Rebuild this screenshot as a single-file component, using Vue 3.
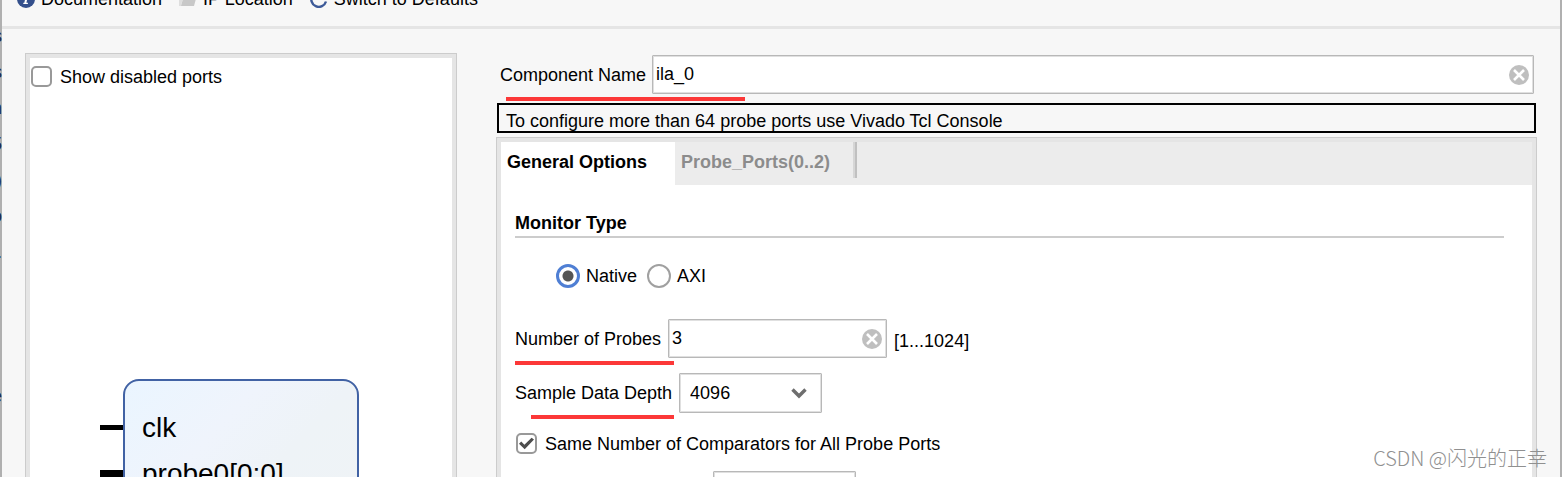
<script setup>
import { ref } from 'vue'

const showDisabled = ref(false)
const componentName = ref('ila_0')
const monitorType = ref('native')
const probeCount = ref('3')
const depth = ref('4096')
const sameComparators = ref(true)
const comparators = ref('')
const backdropLines = ['s', 's', 'n', '5', ')', 'o', '.', '', '', '', 'e']
</script>

<template>
  <div class="window">
    <div class="backdrop" aria-hidden="true">
      <span v-for="(line, i) in backdropLines" :key="i">{{ line }}</span>
    </div>
    <div class="dialog">
      <nav class="toolbar">
        <button type="button" class="tool">
          <svg width="18" height="18" viewBox="0 0 18 18"><circle cx="9" cy="9" r="9" fill="#34508c" /><path d="M9.6 3.2h2v2h-2zM7 7.2h3.7l-1.3 5.6h1.5v1.2H6.3v-1.2h1l1-4.4H7z" fill="#fff" /></svg>
          Documentation
        </button>
        <button type="button" class="tool">
          <svg width="18" height="16" viewBox="0 0 18 16"><path d="M0 1h7l2 2h7v3H4L2 15H0z" fill="#dedede" /><path d="M5 4h13l-3 11H2z" fill="#c8c8c8" /></svg>
          IP Location
        </button>
        <button type="button" class="tool">
          <svg width="18" height="18" viewBox="0 0 18 18"><path d="M13.5 3.5A7.5 7.5 0 1 0 16 11.5" fill="none" stroke="#3d5a98" stroke-width="2.4" /><path d="M10 1h7v7z" fill="#3d5a98" /></svg>
          Switch to Defaults
        </button>
      </nav>

      <main class="main">
        <section class="frame preview">
          <label class="check"><input v-model="showDisabled" type="checkbox" />Show disabled ports</label>
          <svg class="diagram" width="260" height="260" viewBox="0 0 260 260">
            <defs>
              <linearGradient id="fill" x1="0" y1="0" x2="1" y2="1">
                <stop offset="0" stop-color="#eaf5ff" />
                <stop offset="0.3" stop-color="#eff4fc" />
                <stop offset="0.5" stop-color="#eef3f7" />
                <stop offset="1" stop-color="#f0f3f5" />
              </linearGradient>
            </defs>
            <rect x="24" y="1" width="234" height="240" rx="15" fill="url(#fill)" stroke="#4162a4" stroke-width="2" />
            <rect x="0" y="46" width="23" height="5" />
            <rect x="0" y="91" width="23" height="8" />
            <text x="42" y="58">clk</text>
            <text x="42" y="104">probe0[0:0]</text>
          </svg>
        </section>

        <section class="config">
          <div class="name-row">
            <label class="marked" for="component">Component Name</label>
            <div class="field grow">
              <input id="component" v-model="componentName" type="text" />
              <button type="button" class="clear" aria-label="Clear name" @click="componentName = ''">
                <svg width="20" height="20" viewBox="0 0 20 20"><circle cx="10" cy="10" r="10" fill="#bfbfbf" /><path d="M5 5l10 10M15 5L5 15" stroke="#fff" stroke-width="2.6" /></svg>
              </button>
            </div>
          </div>
          <p class="notice">To configure more than 64 probe ports use Vivado Tcl Console</p>

          <div class="frame options">
            <div class="tabs" role="tablist">
              <button type="button" role="tab" class="tab active" aria-selected="true">General Options</button>
              <button type="button" role="tab" class="tab" aria-selected="false">Probe_Ports(0..2)</button>
              <span class="divider"></span>
            </div>
            <div class="form">
              <h2>Monitor Type</h2>
              <div class="radios">
                <label><input v-model="monitorType" type="radio" name="monitor" value="native" />Native</label>
                <label><input v-model="monitorType" type="radio" name="monitor" value="axi" />AXI</label>
              </div>
              <div class="row probes">
                <label class="marked" for="probes">Number of Probes</label>
                <div class="field">
                  <input id="probes" v-model="probeCount" type="text" />
                  <button type="button" class="clear" aria-label="Clear probes" @click="probeCount = ''">
                    <svg width="20" height="20" viewBox="0 0 20 20"><circle cx="10" cy="10" r="10" fill="#bfbfbf" /><path d="M5 5l10 10M15 5L5 15" stroke="#fff" stroke-width="2.6" /></svg>
                  </button>
                </div>
                <span class="range">[1...1024]</span>
              </div>
              <div class="row depth">
                <label class="marked" for="depth">Sample Data Depth</label>
                <div class="select">
                  <select id="depth" v-model="depth"><option>1024</option><option>2048</option><option>4096</option><option>8192</option></select>
                  <svg width="16" height="11" viewBox="0 0 16 11"><path d="M1.5 1.5L8 8l6.5-6.5" fill="none" stroke="#6e6e6e" stroke-width="3.4" /></svg>
                </div>
              </div>
              <label class="check"><input v-model="sameComparators" type="checkbox" />Same Number of Comparators for All Probe Ports</label>
              <div class="row comparators">
                <div class="select"><select v-model="comparators" aria-label="Comparators"><option>1</option><option>2</option></select></div>
              </div>
            </div>
          </div>
        </section>
      </main>
    </div>
    <div class="backdrop" aria-hidden="true"></div>
    <div class="watermark">CSDN @闪光的正幸</div>
  </div>
</template>

<style>
body { margin: 0; overflow: hidden; }
</style>

<style scoped>
* { box-sizing: border-box; }
.window {
  position: relative;
  display: flex;
  height: 100vh;
  overflow: hidden;
  background: #f7f7f7;
  color: #000;
  font: 18px/20px "Liberation Sans", Arial, sans-serif;
}
button, input, select { font: inherit; color: inherit; margin: 0; }
button { padding: 0; border: 0; background: none; }
.backdrop {
  flex: none;
  display: flex;
  flex-direction: column;
  width: 2px;
  padding-top: 18px;
  overflow: hidden;
  background: #b0b0b0;
  color: #1c2a4c;
}
.backdrop span { display: flex; justify-content: flex-end; flex: none; height: 36px; line-height: 36px; }
.dialog { flex: 1; min-width: 0; overflow: hidden; }
.toolbar {
  display: flex;
  gap: 17px;
  margin-top: -11px;
  padding: 0 15px 17px;
  border-bottom: 3px solid #e5e5e5;
}
.tool { display: flex; align-items: center; gap: 6px; white-space: nowrap; }
.main { display: flex; gap: 39px; padding: 24px 23px 0; }
.frame { border: 1px solid #ccc; box-shadow: inset 0 0 0 4px #e5e5e5; background: #fff; padding: 4px; }
.preview { flex: 0 0 432px; min-height: 600px; }
.preview .check { padding: 8px 1px; }
.check { display: flex; align-items: center; gap: 8px; }
.check input {
  appearance: none;
  display: grid;
  place-items: center;
  width: 21px;
  height: 21px;
  border: 2px solid #999;
  border-radius: 5px;
  background: #fff;
}
.check input:checked::after {
  content: "";
  width: 15px;
  height: 13px;
  background: #4d4d4d;
  clip-path: polygon(0 52%, 15% 35%, 36% 60%, 84% 5%, 100% 20%, 38% 95%);
}
.diagram { display: block; margin: 284px 0 0 70px; font-size: 28px; }
.config { flex: 1; min-width: 0; }
.name-row { display: flex; align-items: center; gap: 6px; padding: 2px 3px 9px 4px; }
.marked { position: relative; white-space: nowrap; }
.marked::after {
  content: "";
  position: absolute;
  left: 0;
  right: -13px;
  top: 32px;
  height: 4px;
  background: #fc3838;
}
.name-row .marked::after { left: 6px; right: -99px; z-index: 1; }
.depth .marked::after { left: 16px; right: -2px; }
.field, .select {
  border: 1px solid #b8b8b8;
  border-radius: 1px;
  box-shadow: inset 0 0 0 1px #e0e0e0;
  background: #fff;
}
.field {
  display: flex;
  align-items: center;
  width: 219px;
  height: 39px;
  padding-right: 4px;
}
.field.grow { flex: 1; width: auto; }
.field input { flex: 1; min-width: 0; height: 100%; padding: 0 3px; border: 0; outline: 0; background: none; }
.clear, .clear svg { display: block; }
.notice { margin: 0 1px 4px; padding: 6px 7px 0; height: 30px; border: 2px solid #000; }
.options { min-height: 500px; }
.tabs { display: flex; height: 43px; background: #ececec; }
.tab { padding: 0 23px 4px 6px; font-weight: 700; color: #8c8c8c; white-space: nowrap; }
.tab.active { padding-right: 28px; background: #fff; color: #000; }
.divider { width: 4px; height: 36px; background: linear-gradient(90deg, #d6d6d6 50%, #c0c0c0 50%); }
.form { padding: 28px 28px 0 14px; }
h2 { margin: 0; padding-bottom: 3px; border-bottom: 2px solid #ccc; font-size: 18px; line-height: 20px; }
.radios { display: flex; gap: 10px; margin: 26px 0 31px 41px; }
.radios label { display: flex; align-items: center; gap: 6px; }
.radios input {
  appearance: none;
  width: 24px;
  height: 24px;
  border: 2px solid #a0a0a0;
  border-radius: 50%;
  background: #fff;
}
.radios input:checked { border: 3px solid #4f7fd4; background: radial-gradient(circle, #555 0 5px, #fff 6px); }
.row { display: flex; align-items: center; gap: 7px; }
.range { padding-top: 4px; }
.probes { margin-bottom: 15px; }
.select { position: relative; width: 143px; height: 40px; }
.select select { appearance: none; width: 100%; height: 100%; padding: 0 10px; border: 0; background: none; outline: 0; }
.select svg { position: absolute; right: 14px; top: 14px; pointer-events: none; }
.form .check { margin: 20px 0 17px 1px; }
.comparators { padding-left: 198px; }
.watermark {
  position: absolute;
  right: 15px;
  bottom: 8px;
  color: #909090;
  font: 300 20px/22px "Noto Sans CJK SC", sans-serif;
}
</style>
